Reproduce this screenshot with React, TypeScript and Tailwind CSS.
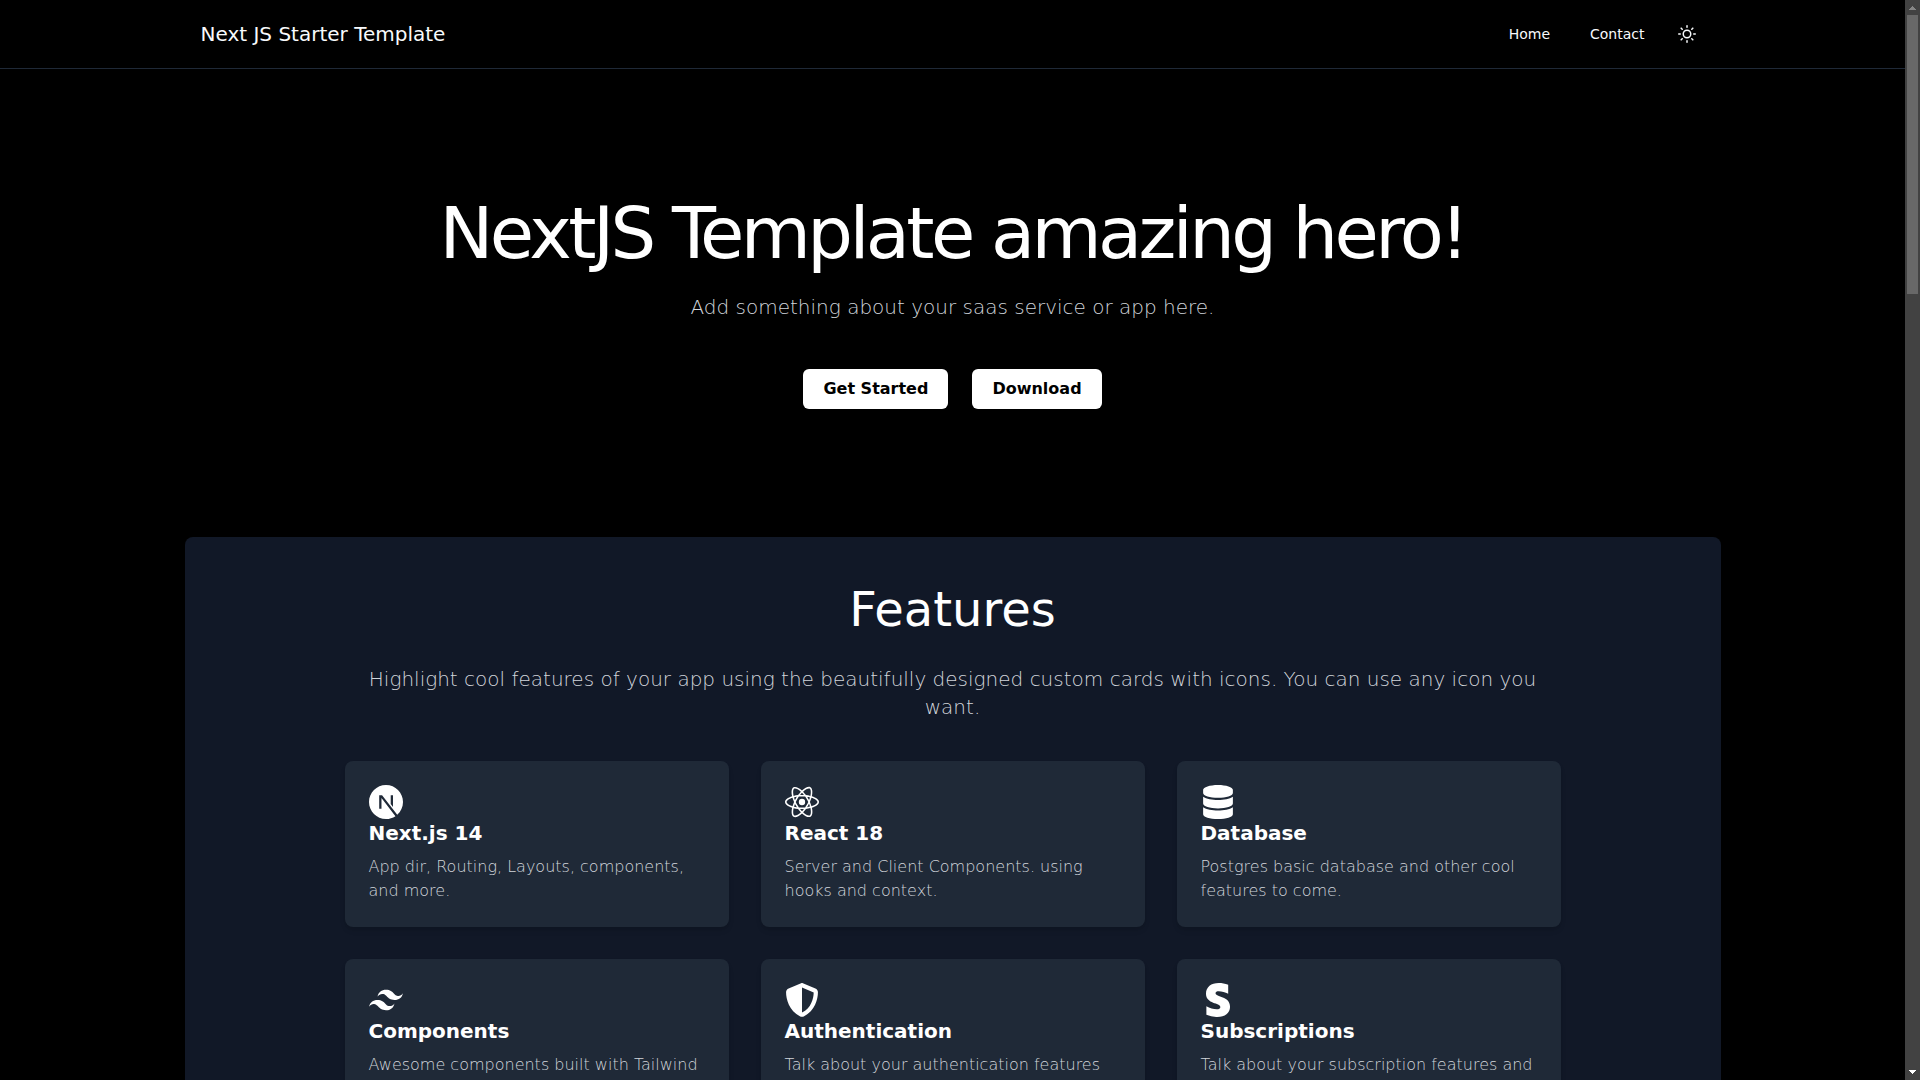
import React from 'react';
import { FaDatabase, FaStripeS } from 'react-icons/fa';
import { FaShieldHalved } from 'react-icons/fa6';
import { FiSun } from 'react-icons/fi';
import { SiNextdotjs, SiReact, SiTailwindcss } from 'react-icons/si';

const features = [
  { title: 'Next.js 14', text: 'App dir, Routing, Layouts, components, and more.', Icon: SiNextdotjs },
  { title: 'React 18', text: 'Server and Client Components. using hooks and context.', Icon: SiReact },
  { title: 'Database', text: 'Postgres basic database and other cool features to come.', Icon: FaDatabase },
  { title: 'Components', text: 'Awesome components built with Tailwind', Icon: SiTailwindcss },
  { title: 'Authentication', text: 'Talk about your authentication features', Icon: FaShieldHalved },
  { title: 'Subscriptions', text: 'Talk about your subscription features and', Icon: FaStripeS },
];

const Navbar: React.FC = () => (
  <header className="border-b border-[#1f2937]">
    <div className="max-w-[1536px] mx-auto px-4 py-4 flex items-center justify-between">
      <a href="#" className="text-xl text-slate-50">Next JS Starter Template</a>
      <nav className="flex items-center gap-2">
        <a href="#" className="px-4 py-2 text-sm text-slate-50">Home</a>
        <a href="#" className="px-4 py-2 text-sm text-slate-50">Contact</a>
        <button type="button" aria-label="Toggle theme" className="h-9 w-9 flex items-center justify-center rounded-md text-slate-50">
          <FiSun className="h-[18px] w-[18px]" />
        </button>
      </nav>
    </div>
  </header>
);

const Hero: React.FC = () => (
  <section className="py-32 flex flex-col items-center text-center">
    <h1 className="text-7xl leading-none tracking-tighter">NextJS Template amazing hero!</h1>
    <p className="mt-6 text-xl font-extralight text-[#d1d5db]">
      Add something about your saas service or app here.
    </p>
    <div className="mt-12 flex gap-6">
      <button type="button" className="px-5 py-2 rounded-md bg-white text-black font-bold">Get Started</button>
      <button type="button" className="px-5 py-2 rounded-md bg-white text-black font-bold">Download</button>
    </div>
  </section>
);

const Features: React.FC = () => (
  <section className="max-w-[1536px] mx-auto py-12 rounded-lg bg-[#111827]">
    <div className="max-w-[1216px] mx-auto">
      <h2 className="text-5xl leading-none text-center">Features</h2>
      <p className="mt-8 px-4 text-xl font-extralight text-center text-[#d1d5db]">
        Highlight cool features of your app using the beautifully designed custom cards with icons. You can use any icon you want.
      </p>
      <div className="mt-10 grid grid-cols-3 gap-8">
        {features.map(({ title, text, Icon }) => (
          <div key={title} className="p-6 rounded-lg bg-[#1f2937] shadow-md">
            <Icon className="h-[34px] w-[34px]" />
            <h3 className="text-xl font-bold">{title}</h3>
            <p className="mt-2 font-extralight text-[#d1d5db]">{text}</p>
          </div>
        ))}
      </div>
    </div>
  </section>
);

const Scrollbar: React.FC = () => (
  <div className="w-[15px] shrink-0 px-[2px] flex flex-col items-center bg-[#424242]" aria-hidden="true">
    <svg viewBox="0 0 7 4" className="mt-[6px] mb-[5px] h-1 w-[7px] shrink-0 fill-[#868686]" shapeRendering="crispEdges">
      <path d="M3 0h1v1h1v1h1v1h1v1H0V3h1V2h1V1h1z" />
    </svg>
    <div className="h-[279px] w-full bg-[#686868]" />
    <svg viewBox="0 0 7 4" className="mt-auto mb-[6px] h-1 w-[7px] shrink-0 fill-white" shapeRendering="crispEdges">
      <path d="M0 0h7v1H6v1H5v1H4v1H3V3H2V2H1V1H0z" />
    </svg>
  </div>
);

const App: React.FC = () => {
  return (
    <div className="h-screen flex overflow-hidden bg-black text-white font-['DejaVu_Sans',sans-serif]">
      <div className="flex-1 overflow-hidden">
        <Navbar />
        <main>
          <Hero />
          <Features />
        </main>
      </div>
      <Scrollbar />
    </div>
  );
};

export default App;
